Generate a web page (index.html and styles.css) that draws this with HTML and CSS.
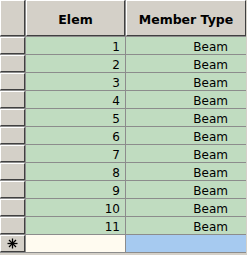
FILE: index.html
```html
<!DOCTYPE html>
<html lang="en">
<head>
  <meta charset="UTF-8">
  <title>Member Types</title>
  <link rel="stylesheet" href="styles.css">
</head>
<body>
  <div class="grid">
    <div class="hcell corner"></div>
    <div class="hcell">Elem</div>
    <div class="hcell">Member Type</div>

    <div class="rhead"></div><div class="cell num">1</div><div class="cell type">Beam</div>
    <div class="rhead"></div><div class="cell num">2</div><div class="cell type">Beam</div>
    <div class="rhead"></div><div class="cell num">3</div><div class="cell type">Beam</div>
    <div class="rhead"></div><div class="cell num">4</div><div class="cell type">Beam</div>
    <div class="rhead"></div><div class="cell num">5</div><div class="cell type">Beam</div>
    <div class="rhead"></div><div class="cell num">6</div><div class="cell type">Beam</div>
    <div class="rhead"></div><div class="cell num">7</div><div class="cell type">Beam</div>
    <div class="rhead"></div><div class="cell num">8</div><div class="cell type">Beam</div>
    <div class="rhead"></div><div class="cell num">9</div><div class="cell type">Beam</div>
    <div class="rhead"></div><div class="cell num">10</div><div class="cell type">Beam</div>
    <div class="rhead"></div><div class="cell num">11</div><div class="cell type">Beam</div>

    <!-- new-row line -->
    <div class="rhead star">
      <svg width="11" height="11" viewBox="0 0 11 11">
        <g stroke="#000" stroke-width="1.3">
          <line x1="5.5" y1="0.5" x2="5.5" y2="10.5"/>
          <line x1="0.5" y1="5.5" x2="10.5" y2="5.5"/>
          <line x1="2" y1="2" x2="9" y2="9"/>
          <line x1="9" y1="2" x2="2" y2="9"/>
        </g>
      </svg>
    </div>
    <div class="cell new-num"></div>
    <div class="cell new-type"></div>
  </div>
</body>
</html>
```

FILE: styles.css
```css
* { box-sizing: border-box; }

body {
  margin: 0;
  background: #d4d0c8;
  font-family: 'DejaVu Sans', sans-serif;
  color: #000;
  width: 247px;
  height: 255px;
  overflow: hidden;
}

.grid {
  display: grid;
  grid-template-columns: 25px 99px 120px;
  grid-template-rows: 36px repeat(12, 17px);
  gap: 1px;
  width: 246px;
  background: #8c8c8c;
  padding-bottom: 1px;
}

.hcell {
  background: #d4d0c8;
  border-top: 1px solid #fff;
  border-left: 1px solid #fff;
  border-right: 1px solid #404040;
  border-bottom: 1px solid #404040;
  font-weight: bold;
  font-size: 12.5px;
  display: flex;
  align-items: center;
  justify-content: center;
  padding-top: 3px;
}

.rhead {
  background: #d4d0c8;
  border-top: 1px solid #fff;
  border-left: 1px solid #fff;
  border-right: 1px solid #404040;
  border-bottom: 1px solid #404040;
}

.star {
  display: flex;
  align-items: center;
  justify-content: center;
}

.cell {
  background: #c0dcc0;
  font-size: 12px;
  display: flex;
  align-items: center;
  justify-content: flex-end;
  padding-top: 2px;
}

.num { padding-right: 5px; }

.type { padding-right: 18px; }

.new-num { background: #fffbf0; }

.new-type { background: #a6caf0; }
```
